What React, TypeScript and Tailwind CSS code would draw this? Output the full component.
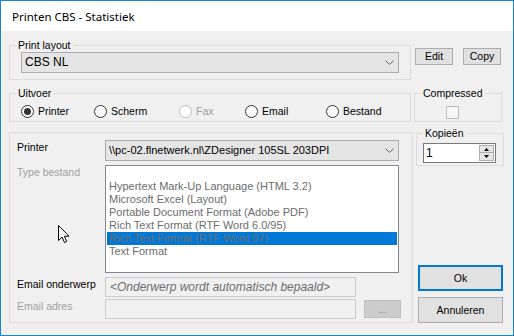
import { ReactNode } from "react";

function Chevron() {
  return (
    <svg width="9" height="6" viewBox="0 0 9 6" className="shrink-0">
      <polyline points="0.5,0.5 4.5,4.5 8.5,0.5" fill="none" stroke="#606060" strokeWidth="1" />
    </svg>
  );
}

function Combo({ children }: { children: ReactNode }) {
  return (
    <div className="h-[21px] border border-[#adadad] bg-[#e5e5e5] flex items-center justify-between pl-[3px] pr-[4px] text-[11px] leading-[13px]">
      <span className="whitespace-nowrap">{children}</span>
      <Chevron />
    </div>
  );
}

function Radio({ label, checked, disabled, w }: { label: string; checked?: boolean; disabled?: boolean; w: string }) {
  return (
    <div className={`flex items-center gap-[4px] ${w}`}>
      <span
        className={`w-[13px] h-[13px] rounded-full border bg-white flex items-center justify-center ${
          disabled ? "border-[#bcbcbc]" : "border-[#333333]"
        }`}
      >
        {checked && <span className="w-[7px] h-[7px] rounded-full bg-[#333333]" />}
      </span>
      <span className={disabled ? "text-[#a0a0a0]" : "text-black"}>{label}</span>
    </div>
  );
}

function Legend({ children }: { children: ReactNode }) {
  return <legend className="px-[2px] text-[10.5px] leading-[13px]">{children}</legend>;
}

function Button({ children, className }: { children: ReactNode; className: string }) {
  return (
    <div className={`bg-[#e1e1e1] flex items-center justify-center text-[10.5px] ${className}`}>
      {children}
    </div>
  );
}

const formats = [
  "",
  "Hypertext Mark-Up Language (HTML 3.2)",
  "Microsoft Excel (Layout)",
  "Portable Document Format (Adobe PDF)",
  "Rich Text Format (RTF Word 6.0/95)",
  "Rich Text Format (RTF Word 97)",
  "Text Format",
];

export default function App() {
  return (
    <div className="relative w-[514px] h-[336px] border border-[#1883d7] bg-[#f0f0f0] flex flex-col overflow-hidden font-['Liberation_Sans',Arial,sans-serif] text-[10.5px] leading-[13px] text-black">
      {/* title bar */}
      <div className="h-[30px] shrink-0 bg-white flex items-center pl-[11px] text-[11.5px] font-['Noto_Sans',sans-serif]">
        Printen CBS - Statistiek
      </div>

      <div className="pl-[8px] pt-[8px] flex flex-col">
        {/* print layout */}
        <div className="flex gap-[3px]">
          <fieldset className="w-[402px] border border-[#dcdcdc] px-[6px] pb-[6px]">
            <Legend>Print layout</Legend>
            <div className="mx-[5px]">
              <Combo>
                <span className="text-[12px]">CBS NL</span>
              </Combo>
            </div>
          </fieldset>
          <div className="w-[88px] flex gap-[10px] pt-[9px] pl-[1px]">
            <Button className="w-[38px] h-[17px] border border-[#adadad]">Edit</Button>
            <Button className="w-[38px] h-[17px] border border-[#adadad]">Copy</Button>
          </div>
        </div>

        {/* uitvoer */}
        <div className="flex gap-[3px] mt-[7px]">
          <fieldset className="w-[402px] border border-[#dcdcdc] px-[6px] pb-[2px]">
            <Legend>Uitvoer</Legend>
            <div className="mt-[3px] h-[16px] flex items-center pl-[5px]">
              <Radio label="Printer" checked w="w-[73px]" />
              <Radio label="Scherm" w="w-[85px]" />
              <Radio label="Fax" disabled w="w-[66px]" />
              <Radio label="Email" w="w-[81px]" />
              <Radio label="Bestand" w="w-[70px]" />
            </div>
          </fieldset>
          <fieldset className="w-[88px] border border-[#dcdcdc] px-[6px] pb-[2px]">
            <Legend>Compressed</Legend>
            <div className="mt-[6px] ml-[25px] w-[13px] h-[13px] border border-[#bcbcbc] bg-[#f7f7f7]" />
          </fieldset>
        </div>

        {/* printer / bestand */}
        <div className="flex gap-[3px] items-stretch">
          <fieldset className="mt-[10px] w-[402px] border border-[#dcdcdc] pl-[7px] pr-[11px] pt-[7px] pb-[3px] flex flex-col">
            <div className="flex items-start">
              <span className="w-[88px] pt-[1px]">Printer</span>
              <div className="w-[294px]">
                <Combo>\\pc-02.flnetwerk.nl\ZDesigner 105SL 203DPI</Combo>
              </div>
            </div>
            <div className="flex items-start mt-[4px]">
              <span className="w-[88px] pt-[1px] text-[#a0a0a0]">Type bestand</span>
              <div className="w-[294px] h-[108px] border border-[#828790] bg-white p-[1px] flex flex-col text-[11px]">
                {formats.map((f, i) => (
                  <div
                    key={i}
                    className={`h-[13px] leading-[13px] pl-[2px] whitespace-nowrap text-[#6d6d6d] ${
                      i === 5 ? "bg-[#0078d7]" : ""
                    }`}
                  >
                    {f}
                  </div>
                ))}
              </div>
            </div>
            <div className="flex items-start mt-[4px]">
              <span className="w-[88px] pt-[1px]">Email onderwerp</span>
              <div className="w-[251px] h-[20px] border border-[#cccccc] bg-[#f0f0f0] flex items-center pl-[4px] italic text-[12px] text-[#6d6d6d] whitespace-nowrap">
                &lt;Onderwerp wordt automatisch bepaald&gt;
              </div>
            </div>
            <div className="flex items-start mt-[2px]">
              <span className="w-[88px] pt-[1px] text-[#a0a0a0]">Email adres</span>
              <div className="w-[251px] h-[20px] border border-[#cccccc] bg-[#f0f0f0]" />
              <div className="ml-[8px] mt-[1px] w-[37px] h-[18px] border border-[#bfbfbf] bg-[#cccccc] flex items-center justify-center text-[#838383] text-[10px]">
                ...
              </div>
            </div>
          </fieldset>

          <div className="mt-[5px] w-[88px] flex flex-col">
            <fieldset className="border border-[#dcdcdc] px-[6px] pb-[2px]">
              <Legend>Kopieën</Legend>
              <div className="mt-[3px] w-[73px] h-[20px] border border-[#7a7a7a] bg-white flex items-center justify-between pl-[2px] pr-[1px]">
                <span className="text-[12px]">1</span>
                <div className="w-[15px] h-[16px] flex flex-col">
                  <div className="h-[8px] border border-[#adadad] bg-[#e5e5e5] flex items-center justify-center">
                    <svg width="5" height="3" viewBox="0 0 5 3">
                      <polygon points="2.5,0 5,3 0,3" fill="#000" />
                    </svg>
                  </div>
                  <div className="h-[8px] border border-t-0 border-[#adadad] bg-[#e5e5e5] flex items-center justify-center">
                    <svg width="5" height="3" viewBox="0 0 5 3">
                      <polygon points="0,0 5,0 2.5,3" fill="#000" />
                    </svg>
                  </div>
                </div>
              </div>
            </fieldset>
            <div className="mt-auto ml-[2px] flex flex-col gap-[6px]">
              <Button className="w-[85px] h-[26px] border-2 border-[#0078d7]">Ok</Button>
              <Button className="w-[85px] h-[26px] border border-[#adadad]">Annuleren</Button>
            </div>
          </div>
        </div>
      </div>

      {/* mouse pointer */}
      <svg className="absolute left-[57px] top-[224px]" width="13" height="19" viewBox="0 0 13 19">
        <path
          d="M0.5 0.5 L0.5 15.5 L4 12 L6.5 17.5 L8.7 16.5 L6.3 11.2 L11 11.2 Z"
          fill="#fff"
          stroke="#000"
          strokeWidth="1"
          strokeLinejoin="round"
        />
      </svg>
    </div>
  );
}
